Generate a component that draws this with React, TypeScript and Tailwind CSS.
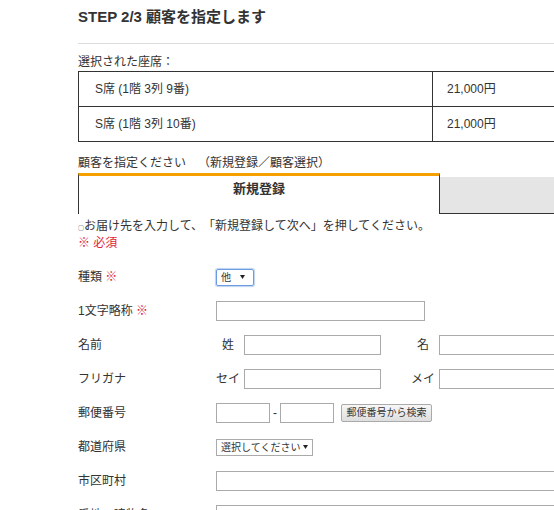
import React from 'react';

const Req = () => <span className="text-[#e2243b]"> ※</span>;

const Arrow = () => (
  <svg width="5" height="4" viewBox="0 0 5 4" className="shrink-0">
    <path d="M0 0h5L2.5 4z" fill="#222" />
  </svg>
);

const FormRow: React.FC<{ label: React.ReactNode; children?: React.ReactNode }> = ({ label, children }) => (
  <div className="flex h-[34px] items-center">
    <div className="w-[138px] shrink-0 text-[12px] leading-[18px]">{label}</div>
    <div className="flex items-center">{children}</div>
  </div>
);

const inputCls = 'h-[20px] border border-[#aaa] bg-white';

const seats = [
  { name: 'S席 (1階 3列 9番)', price: '21,000円' },
  { name: 'S席 (1階 3列 10番)', price: '21,000円' },
];

export default function App() {
  return (
    <div className="h-[510px] w-[554px] overflow-hidden bg-white font-['Liberation_Sans','Noto_Sans_CJK_JP',sans-serif] text-[#333] [text-spacing-trim:space-all]">
      <div className="w-[720px] pl-[78px]">
        <h1 className="pt-[7px] text-[15px] font-bold leading-[20px]">STEP 2/3 顧客を指定します</h1>
        <div className="mt-[16px] border-t border-[#ddd]" />

        <p className="mt-[9px] text-[12px] leading-[18px]">選択された座席：</p>
        <div className="border border-[#333]">
          {seats.map((s, i) => (
            <div key={i} className={`flex text-[12px] ${i > 0 ? 'h-[35px] border-t border-[#333]' : 'h-[34px]'}`}>
              <div className="flex w-[354px] items-center border-r border-[#333] pl-[16px]">{s.name}</div>
              <div className="flex items-center pl-[14px]">{s.price}</div>
            </div>
          ))}
        </div>

        <p className="mt-[12px] text-[12px] leading-[18px]">顧客を指定ください　（新規登録／顧客選択）</p>

        {/* tabs */}
        <div className="mt-[1px] flex items-end">
          <div className="h-[41px] w-[362px] border-x border-t-[3px] border-x-[#333] border-t-[#f5a000] pt-[4px] text-center text-[13px] font-bold leading-[18px]">
            新規登録
          </div>
          <div className="h-[37px] flex-1 border-b border-[#333] bg-[#e5e5e5]" />
        </div>

        <p className="mt-[4px] text-[12px] leading-[17px]">
          <span className="font-['Noto_Sans_CJK_JP'] text-[6px] leading-none">○</span>お届け先を入力して、「新規登録して次へ」を押してください。
        </p>
        <p className="text-[12px] leading-[17px] text-[#e2243b]">※ 必須</p>

        <div className="mt-[8px]">
          <FormRow label={<>種類<Req /></>}>
            <div className="flex h-[17px] w-[38px] items-center rounded-[2px] border border-[#6b9be0] pl-[4px] pr-[8px] text-[10px] shadow-[0_0_1px_1px_rgba(107,155,224,0.45)]">
              <span>他</span>
              <span className="ml-auto"><Arrow /></span>
            </div>
          </FormRow>
          <FormRow label={<>1文字略称<Req /></>}>
            <input className={`${inputCls} w-[209px]`} />
          </FormRow>
          <FormRow label="名前">
            <span className="w-[24px] text-center text-[12px]">姓</span>
            <input className={`${inputCls} ml-[4px] w-[137px]`} />
            <span className="ml-[30px] w-[24px] text-center text-[12px]">名</span>
            <input className={`${inputCls} ml-[4px] w-[137px]`} />
          </FormRow>
          <FormRow label="フリガナ">
            <span className="w-[24px] text-center text-[12px]">セイ</span>
            <input className={`${inputCls} ml-[4px] w-[137px]`} />
            <span className="ml-[30px] w-[24px] text-center text-[12px]">メイ</span>
            <input className={`${inputCls} ml-[4px] w-[137px]`} />
          </FormRow>
          <FormRow label="郵便番号">
            <input className={`${inputCls} w-[54px]`} />
            <span className="mx-[3px] text-[12px]">-</span>
            <input className={`${inputCls} w-[54px]`} />
            <button className="ml-[7px] h-[18px] w-[91px] rounded-[2px] border border-[#aaa] bg-linear-to-b from-[#f7f7f7] to-[#dedede] text-[10px] leading-none text-[#333]">
              郵便番号から検索
            </button>
          </FormRow>
          <FormRow label="都道府県">
            <div className="flex h-[17px] w-[97px] items-center border border-[#aaa] pl-[4px] pr-[4px] text-[10px]">
              <span>選択してください</span>
              <span className="ml-auto"><Arrow /></span>
            </div>
          </FormRow>
          <FormRow label="市区町村">
            <input className={`${inputCls} w-[420px]`} />
          </FormRow>
          <FormRow label="番地・建物名">
            <input className={`${inputCls} w-[420px]`} />
          </FormRow>
        </div>
      </div>
    </div>
  );
}
